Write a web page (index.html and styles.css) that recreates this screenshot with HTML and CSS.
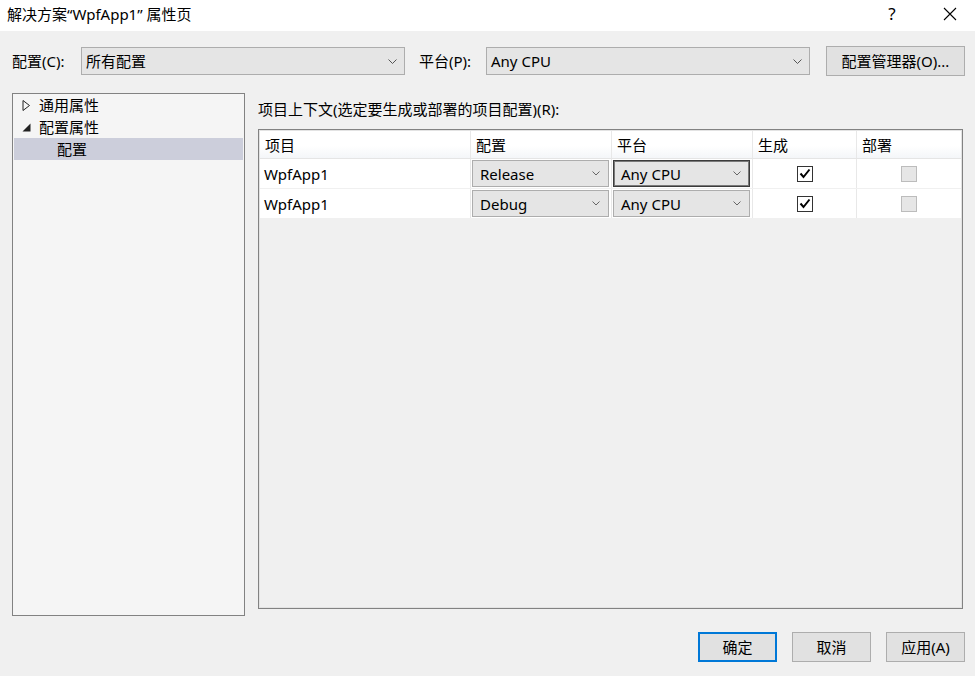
FILE: index.html
```html
<!DOCTYPE html>
<html>
<head>
<meta charset="utf-8">
<link rel="stylesheet" href="styles.css">
</head>
<body>
<div class="window">
  <div class="titlebar">
    <span class="title">解决方案“WpfApp1” 属性页</span>
    <div class="tb-buttons">
      <span class="tb-help">?</span>
      <span class="tb-close"><svg width="14" height="14" viewBox="0 0 14 14"><path d="M1 1L13 13M13 1L1 13" stroke="#000" stroke-width="1.1" fill="none"/></svg></span>
    </div>
  </div>
  <div class="body">
    <div class="toolbar">
      <span class="lbl lbl-config">配置(C):</span>
      <div class="combo top-combo"><span>所有配置</span><svg class="chev" width="9" height="5" viewBox="0 0 9 5"><path d="M0.5 0.5L4.5 4.5L8.5 0.5" stroke="#555" fill="none"/></svg></div>
      <span class="lbl lbl-platform">平台(P):</span>
      <div class="combo top-combo"><span>Any CPU</span><svg class="chev" width="9" height="5" viewBox="0 0 9 5"><path d="M0.5 0.5L4.5 4.5L8.5 0.5" stroke="#555" fill="none"/></svg></div>
      <button class="btn btn-mgr">配置管理器(O)...</button>
    </div>
    <div class="content">
      <div class="tree">
        <div class="tree-row"><svg class="tw" width="9" height="11" viewBox="0 0 9 11"><path d="M1 0.5L7.5 5.5L1 10.5Z" fill="none" stroke="#222"/></svg><span>通用属性</span></div>
        <div class="tree-row"><svg class="tw" width="9" height="11" viewBox="0 0 9 11"><path d="M8.5 1.5L8.5 9.5L0.5 9.5Z" fill="#222"/></svg><span>配置属性</span></div>
        <div class="tree-row selected child"><span>配置</span></div>
      </div>
      <div class="right">
        <div class="ctx-label">项目上下文(选定要生成或部署的项目配置)(R):</div>
        <div class="grid">
          <div class="grow ghead">
            <div class="gc c1">项目</div>
            <div class="gc c2">配置</div>
            <div class="gc c3">平台</div>
            <div class="gc c4">生成</div>
            <div class="gc c5">部署</div>
          </div>
          <div class="grow gbody">
            <div class="gc c1">WpfApp1</div>
            <div class="gc c2"><div class="combo cell-combo"><span>Release</span><svg class="chev" width="8" height="5" viewBox="0 0 8 5"><path d="M0.5 0.5L4 4L7.5 0.5" stroke="#666" fill="none"/></svg></div></div>
            <div class="gc c3"><div class="combo cell-combo focus"><span>Any CPU</span><svg class="chev" width="8" height="5" viewBox="0 0 8 5"><path d="M0.5 0.5L4 4L7.5 0.5" stroke="#666" fill="none"/></svg></div></div>
            <div class="gc c4 center"><span class="chk"><svg width="12" height="11" viewBox="0 0 12 11"><path d="M1.5 5.5L4.5 9L10.5 1.5" stroke="#000" stroke-width="2" fill="none"/></svg></span></div>
            <div class="gc c5 center"><span class="chk disabled"></span></div>
          </div>
          <div class="grow gbody">
            <div class="gc c1">WpfApp1</div>
            <div class="gc c2"><div class="combo cell-combo"><span>Debug</span><svg class="chev" width="8" height="5" viewBox="0 0 8 5"><path d="M0.5 0.5L4 4L7.5 0.5" stroke="#666" fill="none"/></svg></div></div>
            <div class="gc c3"><div class="combo cell-combo"><span>Any CPU</span><svg class="chev" width="8" height="5" viewBox="0 0 8 5"><path d="M0.5 0.5L4 4L7.5 0.5" stroke="#666" fill="none"/></svg></div></div>
            <div class="gc c4 center"><span class="chk"><svg width="12" height="11" viewBox="0 0 12 11"><path d="M1.5 5.5L4.5 9L10.5 1.5" stroke="#000" stroke-width="2" fill="none"/></svg></span></div>
            <div class="gc c5 center"><span class="chk disabled"></span></div>
          </div>
        </div>
      </div>
    </div>
    <div class="footer">
      <button class="btn btn-foot default">确定</button>
      <button class="btn btn-foot">取消</button>
      <button class="btn btn-foot">应用(A)</button>
    </div>
  </div>
</div>
</body>
</html>
```

FILE: styles.css
```css
* { box-sizing: border-box; }
html, body { margin: 0; padding: 0; }
body {
  width: 975px;
  height: 676px;
  overflow: hidden;
  background: #f0f0f0;
  font-family: "Noto Sans", "Noto Sans CJK SC", sans-serif;
  font-size: 15px;
  color: #000;
}
.window { width: 975px; height: 676px; display: flex; flex-direction: column; }
.titlebar {
  height: 31px;
  background: #fff;
  display: flex;
  align-items: center;
  justify-content: space-between;
  padding-left: 7px;
}
.title { font-size: 15px; line-height: 20px; margin-top: -3px; }
.tb-buttons { display: flex; align-items: center; height: 31px; }
.tb-help { width: 46px; text-align: center; font-size: 17px; margin-right: 12px; margin-top: -5px; }
.tb-close { width: 46px; display: flex; justify-content: center; margin-right: 2px; margin-top: -3px; }
.body { flex: 1; padding: 15px 10px 0 12px; display: flex; flex-direction: column; }
.toolbar { display: flex; align-items: center; height: 30px; }
.lbl { line-height: 20px; }
.lbl-config { width: 69px; }
.lbl-platform { margin-left: 14px; width: 67px; }
.combo {
  background: #e5e5e5;
  border: 1px solid #adadad;
  display: flex;
  align-items: center;
  justify-content: space-between;
  line-height: 20px;
}
.top-combo { width: 324px; height: 28px; padding: 0 7px 0 4px; }
.btn {
  font-family: inherit;
  font-size: 15px;
  color: #000;
  background: #e1e1e1;
  border: 1px solid #adadad;
  padding: 0;
  line-height: 20px;
}
.btn-mgr { margin-left: 16px; width: 139px; height: 30px; }
.content { display: flex; margin-top: 17px; height: 523px; }
.tree {
  width: 233px;
  height: 523px;
  background: #f5f5f5;
  border: 1px solid #828282;
  padding: 0 1px;
}
.tree-row { height: 22px; display: flex; align-items: center; padding-left: 8px; line-height: 20px; }
.tree-row .tw { margin-right: 8px; }
.tree-row.child { padding-left: 43px; }
.tree-row.selected { background: #cccedb; }
.right { margin-left: 13px; width: 705px; display: flex; flex-direction: column; }
.ctx-label { line-height: 20px; margin-top: 6px; }
.grid {
  margin-top: 10px;
  height: 480px;
  border: 1px solid #828282;
  background: #f0f0f0;
  box-shadow: inset 0 0 0 1px #e3e3e3;
  padding: 1px;
}
.grow { display: flex; }
.ghead { height: 28px; background: linear-gradient(#ffffff 0%, #ffffff 55%, #f4f6f9 100%); border-bottom: 1px solid #e5e5e5; }
.gbody { height: 30px; background: #fff; border-bottom: 1px solid #f0f0f0; }
.gc { display: flex; align-items: center; line-height: 20px; border-right: 1px solid #e8e8e8; }
.ghead .gc { padding-left: 5px; }
.gbody .c1 { padding-left: 4px; }
.gbody .c2, .gbody .c3 { padding: 0 2px 0 1px; }
.c1 { width: 211px; }
.c2 { width: 141px; }
.c3 { width: 141px; }
.c4 { width: 104px; }
.c5 { width: 104px; border-right: none; }
.center { justify-content: center; }
.cell-combo { width: 137px; height: 27px; padding: 0 8px 0 7px; }
.cell-combo.focus { border: 1px solid #3c3c3c; box-shadow: inset 0 0 0 1px #7a7a7a; }
.chk {
  width: 16px;
  height: 16px;
  border: 1px solid #333;
  background: #fff;
  display: flex;
  align-items: center;
  justify-content: center;
}
.chk.disabled { background: #e6e6e6; border-color: #bcbcbc; }
.footer { display: flex; justify-content: flex-end; gap: 15px; margin-top: 16px; }
.btn-foot { width: 79px; height: 30px; }
.btn-foot.default { border: 2px solid #0078d7; }
```
